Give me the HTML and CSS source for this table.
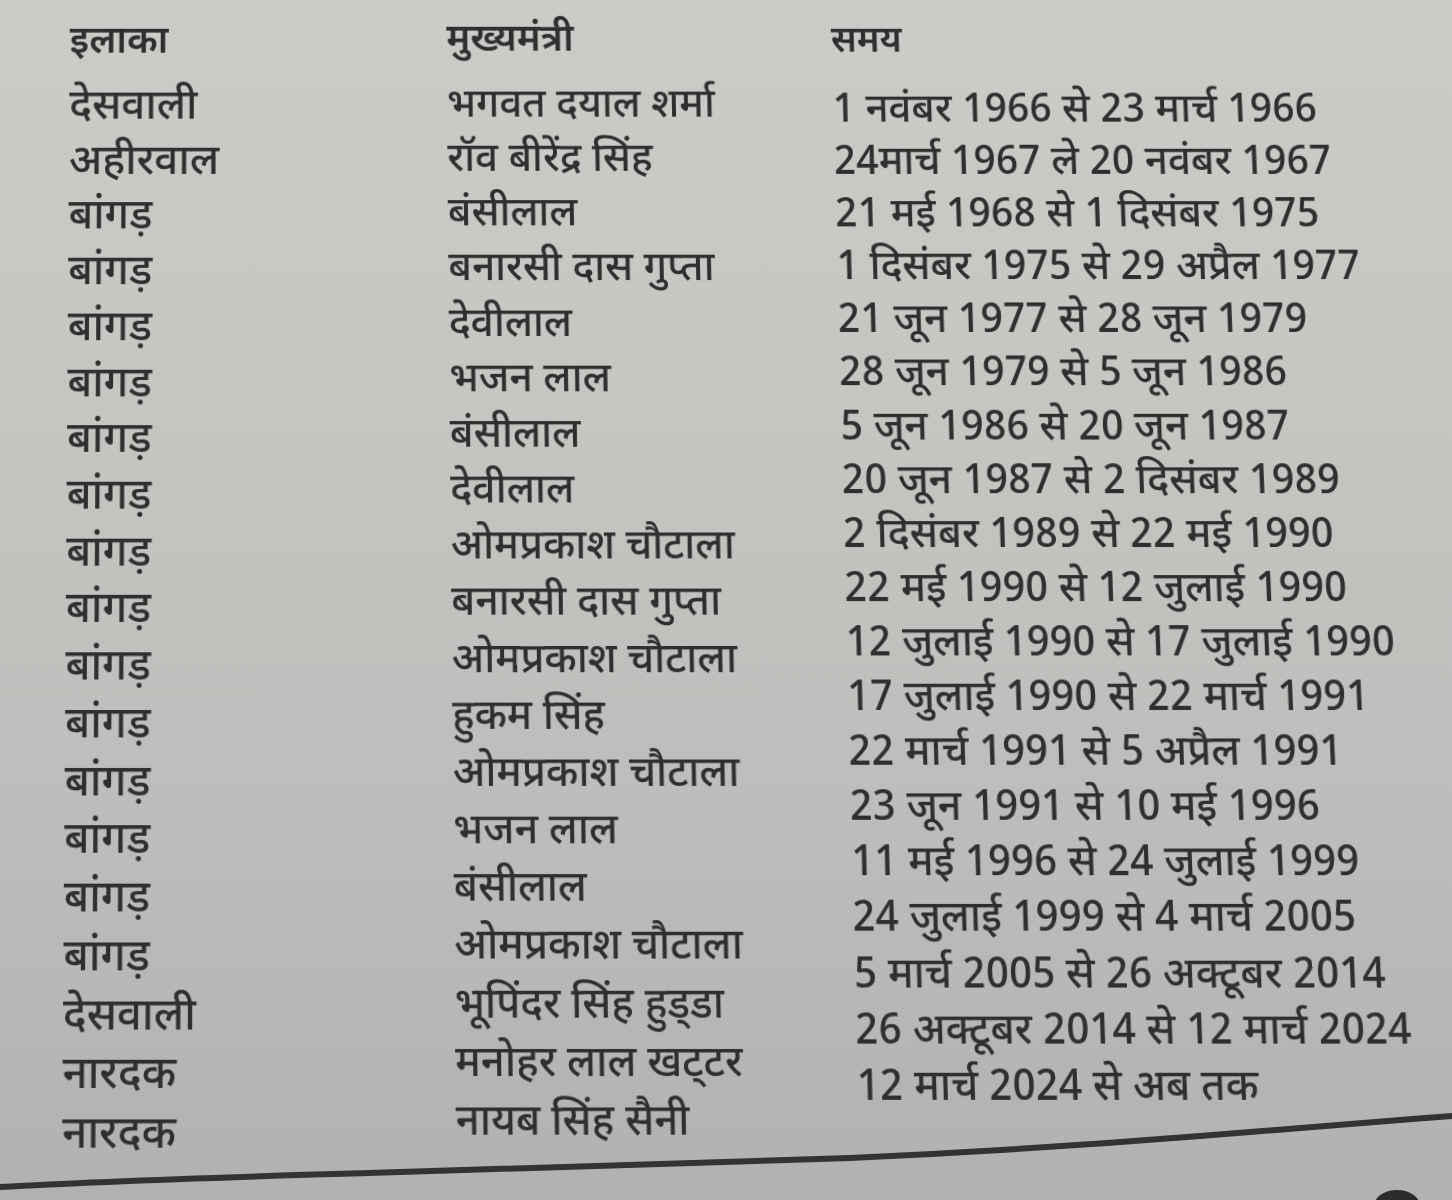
FILE: index.html
```html
<!DOCTYPE html>
<html lang="hi">
<head>
<meta charset="utf-8">
<title>हरियाणा के मुख्यमंत्री</title>
<link rel="stylesheet" href="styles.css">
</head>
<body>
<div class="page">
  <div class="table">
    <div class="col col-region">
      <div class="head">इलाका</div>
      <div class="cell">देसवाली</div>
      <div class="cell">अहीरवाल</div>
      <div class="cell">बांगड़</div>
      <div class="cell">बांगड़</div>
      <div class="cell">बांगड़</div>
      <div class="cell">बांगड़</div>
      <div class="cell">बांगड़</div>
      <div class="cell">बांगड़</div>
      <div class="cell">बांगड़</div>
      <div class="cell">बांगड़</div>
      <div class="cell">बांगड़</div>
      <div class="cell">बांगड़</div>
      <div class="cell">बांगड़</div>
      <div class="cell">बांगड़</div>
      <div class="cell">बांगड़</div>
      <div class="cell">बांगड़</div>
      <div class="cell">देसवाली</div>
      <div class="cell">नारदक</div>
      <div class="cell">नारदक</div>
    </div>
    <div class="col col-cm">
      <div class="head">मुख्यमंत्री</div>
      <div class="cell">भगवत दयाल शर्मा</div>
      <div class="cell">रॉव बीरेंद्र सिंह</div>
      <div class="cell">बंसीलाल</div>
      <div class="cell">बनारसी दास गुप्ता</div>
      <div class="cell">देवीलाल</div>
      <div class="cell">भजन लाल</div>
      <div class="cell">बंसीलाल</div>
      <div class="cell">देवीलाल</div>
      <div class="cell">ओमप्रकाश चौटाला</div>
      <div class="cell">बनारसी दास गुप्ता</div>
      <div class="cell">ओमप्रकाश चौटाला</div>
      <div class="cell">हुकम सिंह</div>
      <div class="cell">ओमप्रकाश चौटाला</div>
      <div class="cell">भजन लाल</div>
      <div class="cell">बंसीलाल</div>
      <div class="cell">ओमप्रकाश चौटाला</div>
      <div class="cell">भूपिंदर सिंह हुड्&#8204;डा</div>
      <div class="cell">मनोहर लाल खट्&#8204;टर</div>
      <div class="cell">नायब सिंह सैनी</div>
    </div>
    <div class="col col-time">
      <div class="head">समय</div>
      <div class="cell">1 नवंबर 1966 से 23 मार्च 1966</div>
      <div class="cell">24मार्च 1967 ले 20 नवंबर 1967</div>
      <div class="cell">21 मई 1968 से 1 दिसंबर 1975</div>
      <div class="cell">1 दिसंबर 1975 से 29 अप्रैल 1977</div>
      <div class="cell">21 जून 1977 से 28 जून 1979</div>
      <div class="cell">28 जून 1979 से 5 जून 1986</div>
      <div class="cell">5 जून 1986 से 20 जून 1987</div>
      <div class="cell">20 जून 1987 से 2 दिसंबर 1989</div>
      <div class="cell">2 दिसंबर 1989 से 22 मई 1990</div>
      <div class="cell">22 मई 1990 से 12 जुलाई 1990</div>
      <div class="cell">12 जुलाई 1990 से 17 जुलाई 1990</div>
      <div class="cell">17 जुलाई 1990 से 22 मार्च 1991</div>
      <div class="cell">22 मार्च 1991 से 5 अप्रैल 1991</div>
      <div class="cell">23 जून 1991 से 10 मई 1996</div>
      <div class="cell">11 मई 1996 से 24 जुलाई 1999</div>
      <div class="cell">24 जुलाई 1999 से 4 मार्च 2005</div>
      <div class="cell">5 मार्च 2005 से 26 अक्टूबर 2014</div>
      <div class="cell">26 अक्टूबर 2014 से 12 मार्च 2024</div>
      <div class="cell">12 मार्च 2024 से अब तक</div>
    </div>
  </div>
  <svg class="rule" viewBox="0 0 1452 100" preserveAspectRatio="none" aria-hidden="true">
    <path d="M0 87 C 120 80, 260 76, 400 72 C 560 67, 720 63, 850 58 C 980 52, 1100 44, 1200 36 C 1290 29, 1370 22, 1452 16" fill="none" stroke="#333333" stroke-width="6" stroke-linecap="round"/>
    <ellipse cx="1397" cy="108" rx="24" ry="18" fill="#2b2b2b"/>
  </svg>
</div>
</body>
</html>
```

FILE: styles.css
```css
html, body {
  margin: 0;
  padding: 0;
}
body {
  width: 1452px;
  height: 1200px;
  overflow: hidden;
  background: #c3c3c0;
  font-family: "Noto Sans Devanagari", "Noto Sans", sans-serif;
  color: #2f2f2f;
}
.page {
  width: 1452px;
  height: 1200px;
  display: flex;
  flex-direction: column;
  background: linear-gradient(180deg, #cbcbc8 0%, #c5c5c2 35%, #bcbcba 70%, #b1b1af 100%);
}
.table {
  display: flex;
  height: 1100px;
  flex: none;
  transform-origin: 237px 0;
  transform: perspective(3000px) rotateX(7.1deg);
}
.col {
  display: flex;
  flex-direction: column;
  flex: none;
  box-sizing: border-box;
}
.head {
  height: 50px;
  line-height: 50px;
  font-size: 38px;
  font-weight: 600;
}
.cell {
  white-space: nowrap;
  font-weight: 500;
}
.col-region {
  width: 446px;
  padding-left: 70px;
  padding-top: 19px;
  font-size: 42px;
}
.col-region .head {
  margin-bottom: 13px;
}
.col-region .cell {
  height: 54.73px;
  line-height: 54.73px;
}
.col-cm {
  width: 384px;
  padding-top: 17px;
  font-size: 40px;
}
.col-cm .head {
  margin-bottom: 13px;
}
.col-cm .cell {
  height: 54.17px;
  line-height: 54.17px;
}
.col-time {
  flex: 1;
  padding-top: 19px;
  font-size: 40px;
}
.col-time .head {
  margin-bottom: 17px;
  font-size: 36px;
}
.col-time .cell {
  height: 52.1px;
  line-height: 52.1px;
}
.rule {
  display: block;
  width: 1452px;
  height: 100px;
  flex: none;
}
```
